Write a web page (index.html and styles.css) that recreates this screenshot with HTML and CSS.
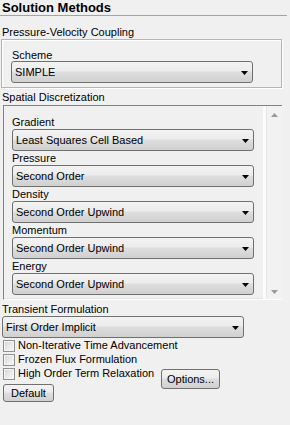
FILE: index.html
```html
<!DOCTYPE html>
<html>
<head>
<meta charset="utf-8">
<link rel="stylesheet" href="styles.css">
</head>
<body>
<div class="panel">
  <div class="title">Solution Methods</div>

  <div class="section-label first">Pressure-Velocity Coupling</div>
  <div class="group">
    <div class="field-label">Scheme</div>
    <div class="select"><span>SIMPLE</span><svg class="arrow" width="7" height="4" viewBox="0 0 7 4"><polygon points="0,0 7,0 3.5,4" fill="#000"/></svg></div>
  </div>

  <div class="section-label second">Spatial Discretization</div>
  <div class="scroll-group">
    <div class="scroll-content">
      <div class="item">
        <div class="item-label">Gradient</div>
        <div class="select"><span>Least Squares Cell Based</span><svg class="arrow" width="7" height="4" viewBox="0 0 7 4"><polygon points="0,0 7,0 3.5,4" fill="#000"/></svg></div>
      </div>
      <div class="item">
        <div class="item-label">Pressure</div>
        <div class="select"><span>Second Order</span><svg class="arrow" width="7" height="4" viewBox="0 0 7 4"><polygon points="0,0 7,0 3.5,4" fill="#000"/></svg></div>
      </div>
      <div class="item">
        <div class="item-label">Density</div>
        <div class="select"><span>Second Order Upwind</span><svg class="arrow" width="7" height="4" viewBox="0 0 7 4"><polygon points="0,0 7,0 3.5,4" fill="#000"/></svg></div>
      </div>
      <div class="item">
        <div class="item-label">Momentum</div>
        <div class="select"><span>Second Order Upwind</span><svg class="arrow" width="7" height="4" viewBox="0 0 7 4"><polygon points="0,0 7,0 3.5,4" fill="#000"/></svg></div>
      </div>
      <div class="item">
        <div class="item-label">Energy</div>
        <div class="select"><span>Second Order Upwind</span><svg class="arrow" width="7" height="4" viewBox="0 0 7 4"><polygon points="0,0 7,0 3.5,4" fill="#000"/></svg></div>
      </div>
    </div>
    <div class="scrollbar">
      <svg class="sb-arrow" width="7" height="4" viewBox="0 0 7 4"><polygon points="0,4 7,4 3.5,0" fill="#9a9a9a"/></svg>
      <svg class="sb-arrow" width="7" height="4" viewBox="0 0 7 4"><polygon points="0,0 7,0 3.5,4" fill="#9a9a9a"/></svg>
    </div>
  </div>

  <div class="section-label third">Transient Formulation</div>
  <div class="select wide"><span>First Order Implicit</span><svg class="arrow" width="7" height="4" viewBox="0 0 7 4"><polygon points="0,0 7,0 3.5,4" fill="#000"/></svg></div>

  <div class="check-row"><span class="checkbox"></span><span class="check-label">Non-Iterative Time Advancement</span></div>
  <div class="check-row"><span class="checkbox"></span><span class="check-label">Frozen Flux Formulation</span></div>
  <div class="check-row"><span class="checkbox"></span><span class="check-label fixed">High Order Term Relaxation</span><span class="button options">Options...</span></div>

  <div class="button default">Default</div>
</div>
</body>
</html>
```

FILE: styles.css
```css
html, body {
  margin: 0;
  padding: 0;
  background: #f0f0f0;
}

body {
  font-family: "Liberation Sans", Arial, sans-serif;
  font-size: 11px;
  color: #000;
  width: 290px;
  height: 425px;
  overflow: hidden;
}

.panel {
  display: flex;
  flex-direction: column;
  align-items: flex-start;
}

.title {
  box-sizing: border-box;
  width: 287px;
  height: 16px;
  line-height: 15px;
  padding-left: 2px;
  font-size: 13px;
  font-weight: bold;
  border-bottom: 1px solid #a3a3a3;
}

.section-label {
  line-height: 13px;
  height: 13px;
  padding-left: 2px;
  white-space: nowrap;
}

.section-label.first { margin-top: 10px; }
.section-label.second { margin-top: 3px; margin-bottom: 1px; }
.section-label.third { margin-top: 3px; }

.group {
  box-sizing: border-box;
  margin-left: 1px;
  width: 281px;
  height: 49px;
  border: 1px solid #b5b5b5;
  box-shadow: inset 1px 1px 0 #fff, 1px 1px 0 #fff;
  padding: 9px 0 0 9px;
}

.field-label {
  line-height: 12px;
  height: 12px;
  padding-left: 1px;
}

.select {
  box-sizing: border-box;
  width: 242px;
  height: 22px;
  border: 1px solid #707070;
  border-radius: 3px;
  background: linear-gradient(#f3f3f3 0%, #ececec 45%, #dedede 50%, #d0d0d0 100%);
  display: flex;
  align-items: center;
  justify-content: space-between;
  padding: 0 4px 0 3px;
  white-space: nowrap;
}

.select span {
  line-height: 14px;
}

.select.wide {
  margin-left: 2px;
}

.arrow {
  display: block;
  flex: none;
  margin-top: 1px;
}

.scroll-group {
  box-sizing: border-box;
  margin-left: 3px;
  width: 279px;
  height: 195px;
  display: flex;
  border-top: 1px solid #838383;
  border-left: 1px solid #838383;
  border-bottom: 1px solid #fdfdfd;
}

.scroll-content {
  box-sizing: border-box;
  width: 259px;
  padding: 9px 0 0 8px;
  display: flex;
  flex-direction: column;
  border-bottom: 1px solid #e3e3e3;
}

.item-label {
  line-height: 14px;
  height: 14px;
}

.scrollbar {
  box-sizing: border-box;
  width: 19px;
  border-left: 1px solid #fbfbfb;
  background: linear-gradient(90deg, #fbfbfb 0, #fbfbfb 2px, #e6e6e6 2px, #e6e6e6 3px, #f2f2f2 3px, #f2f2f2 18px, #e8e8e8 18px);
  display: flex;
  flex-direction: column;
  justify-content: space-between;
  align-items: center;
  padding: 7px 0 5px 3px;
}

.sb-arrow {
  display: block;
}

.check-row {
  display: flex;
  align-items: flex-start;
  height: 14px;
  white-space: nowrap;
}

.check-row:last-of-type {
  height: auto;
}

.checkbox {
  box-sizing: border-box;
  width: 12px;
  height: 12px;
  margin: 2px 0 0 3px;
  border: 1px solid #8e8f8f;
  background: linear-gradient(135deg, #d6d6d6 0%, #ececec 60%, #f6f6f6 100%);
  box-shadow: inset 0 0 0 1px #f4f4f4;
}

.check-label {
  margin-left: 3px;
  line-height: 14px;
}

.check-label.fixed {
  width: 143px;
}

.button {
  box-sizing: border-box;
  border: 1px solid #707070;
  border-radius: 3px;
  background: linear-gradient(#f3f3f3 0%, #ececec 45%, #dedede 50%, #d0d0d0 100%);
  display: flex;
  align-items: center;
  justify-content: center;
  white-space: nowrap;
}

.options {
  width: 59px;
  height: 20px;
  margin-top: 3px;
}

.default {
  width: 51px;
  height: 18px;
  margin: 4px 0 0 3px;
}
```
